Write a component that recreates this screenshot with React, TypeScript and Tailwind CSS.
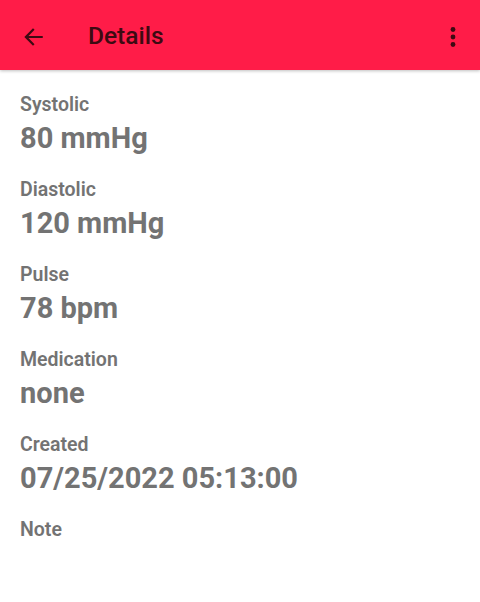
import React from "react";

const rows = [
  { label: "Systolic", value: "80 mmHg" },
  { label: "Diastolic", value: "120 mmHg" },
  { label: "Pulse", value: "78 bpm" },
  { label: "Medication", value: "none" },
  { label: "Created", value: "07/25/2022 05:13:00" },
  { label: "Note", value: "" },
];

const App = () => {
  return (
    <div className="w-[480px] h-[602px] bg-white font-['Roboto',sans-serif] overflow-hidden">
      <header className="h-[70px] pt-[3px] bg-[#ff1c48] flex items-center shadow-[0_1px_3px_rgba(0,0,0,0.25)]">
        <svg
          className="ml-[20px] w-[26px] h-[26px] text-[#3d0a12]"
          viewBox="0 0 24 24"
          fill="currentColor"
        >
          <path d="M21 11H7.83l5.59-5.59L12 4l-8 8 8 8 1.41-1.41L7.83 13H21v-2z" />
        </svg>
        <h1 className="ml-[42px] text-[24.5px] font-medium text-[#3d0a12]">
          Details
        </h1>
        <svg
          className="ml-auto mr-[15px] w-[24px] h-[30px] text-[#3d0a12]"
          viewBox="0 0 24 30"
          fill="currentColor"
        >
          <circle cx="12" cy="7.5" r="2.4" />
          <circle cx="12" cy="15" r="2.4" />
          <circle cx="12" cy="22.5" r="2.4" />
        </svg>
      </header>

      <main className="px-5 pt-[24px] flex flex-col gap-[24px]">
        {rows.map((r) => (
          <div key={r.label} className="flex flex-col">
            <span className="text-[19.5px] leading-[22px] font-semibold text-[#737373]">
              {r.label}
            </span>
            {r.value && (
              <span className="mt-[5px] text-[29px] leading-[34px] font-bold text-[#737373]">
                {r.value}
              </span>
            )}
          </div>
        ))}
      </main>
    </div>
  );
};

export default App;
